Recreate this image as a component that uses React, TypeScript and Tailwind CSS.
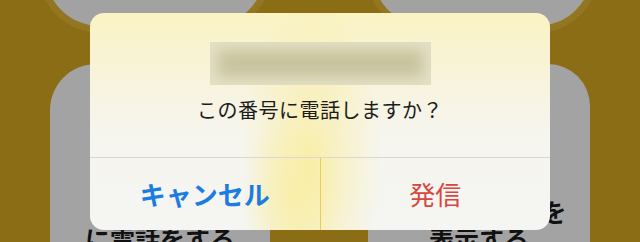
const jp = "font-['Noto_Sans_CJK_JP','Noto_Sans',sans-serif]";

function Circle() {
  return (
    <div className="w-[220px] h-[110px] -mt-[84px] rounded-full bg-[#a2a2a2] shadow-[0_0_0_7px_#927621]" />
  );
}

function Card({ lines, className }: { lines: string[]; className: string }) {
  return (
    <div className={`flex flex-col items-center bg-[#a3a3a3] ${className}`}>
      {lines.map((l) => (
        <div key={l} className="text-[25px] leading-[27px] font-bold text-[#111] whitespace-nowrap">
          {l}
        </div>
      ))}
    </div>
  );
}

export default function App() {
  return (
    <div className={`relative w-[640px] h-[242px] overflow-hidden bg-[#8a6d14] ${jp}`}>
      {/* screen behind the alert */}
      <div className="flex flex-col">
        <div className="flex pl-[45px] gap-[107px]">
          <Circle />
          <Circle />
        </div>
        <div className="flex pl-[50px] gap-[98px] mt-[38px]">
          <Card lines={["に電話をする"]} className="w-[220px] h-[200px] pt-[161px] rounded-t-[46px]" />
          <Card lines={["連絡先の詳細を", "表示する"]} className="w-[222px] h-[200px] pt-[134px] rounded-t-[42px]" />
        </div>
      </div>

      {/* alert */}
      <div className="absolute left-[90px] top-[13px] w-[460px] h-[217px] rounded-[14px] overflow-hidden flex flex-col bg-[#f5f5f3] bg-[image:radial-gradient(ellipse_50px_90px_at_44%_85%,rgba(250,236,150,0.55),transparent),radial-gradient(ellipse_70px_170px_at_48%_70%,rgba(250,236,150,0.75),transparent),linear-gradient(to_bottom,#faf3c3,#f8f3d8_25%,#f6f5ee_55%,#f5f5f3)]">
        <div className="h-[144px] flex flex-col items-center">
          <div className="mt-[29px] w-[221px] h-[43px] bg-[#c8c49d] shadow-[inset_0_0_14px_8px_#e4e0c6]" />
          <div className="mt-[13px] text-[20px] leading-[24px] text-[#1c1c1c] tracking-[0.5px]">
            この番号に電話しますか？
          </div>
        </div>
        <div className="h-px bg-[#d9d8d4]" />
        <div className="flex flex-1">
          <button className="flex-1 flex items-center justify-center pb-[2px] text-[26px] font-bold text-[#1b7ddf]">
            キャンセル
          </button>
          <div className="w-px bg-[#e2cf5a]" />
          <button className="flex-1 flex items-center justify-center pb-[2px] text-[26px] text-[#d8473f]">
            発信
          </button>
        </div>
      </div>
    </div>
  );
}
